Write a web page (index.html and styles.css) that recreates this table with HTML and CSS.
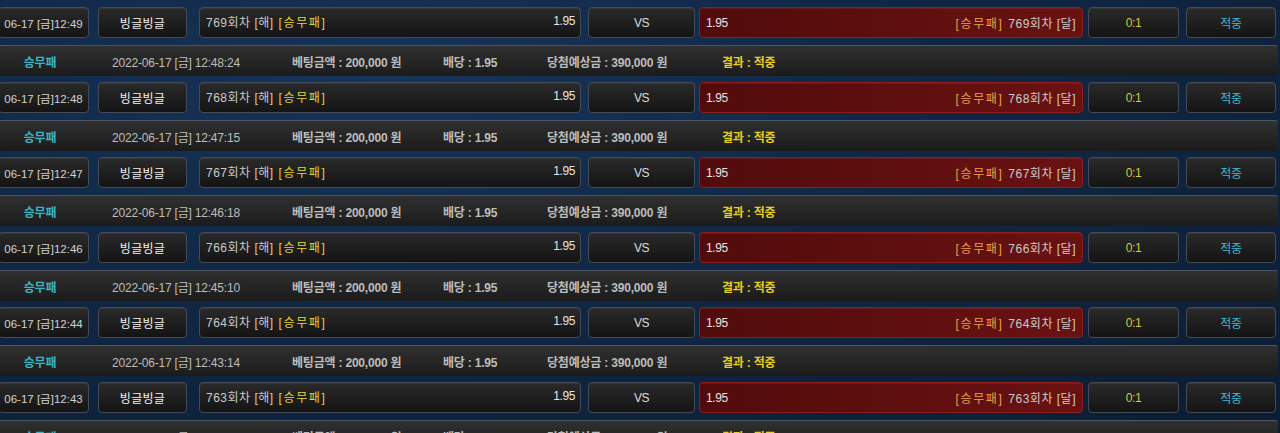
FILE: index.html
```html
<!DOCTYPE html>
<html lang="ko">
<head>
<meta charset="utf-8">
<link rel="stylesheet" href="styles.css">
</head>
<body>
<div class="list">
  <div class="bet">
    <div class="top">
      <div class="box date">06-17 [금]12:49</div>
      <div class="box name">빙글빙글</div>
      <div class="box home"><span><span class="rnd">769회차 [해]</span> <span class="type">[승무패]</span></span><span class="odd">1.95</span></div>
      <div class="box vs">VS</div>
      <div class="box away"><span class="odd">1.95</span><span><span class="type2">[승무패]</span> <span class="rnd">769회차 [달]</span></span></div>
      <div class="box score">0:1</div>
      <div class="box res">적중</div>
    </div>
    <div class="info">
      <span class="c1">승무패</span><span class="c2">2022-06-17 [금] 12:48:24</span><span class="c3">베팅금액 : 200,000 원</span><span class="c4">배당 : 1.95</span><span class="c5">당첨예상금 : 390,000 원</span><span class="c6">결과 : 적중</span>
    </div>
  </div>
  <div class="bet">
    <div class="top">
      <div class="box date">06-17 [금]12:48</div>
      <div class="box name">빙글빙글</div>
      <div class="box home"><span><span class="rnd">768회차 [해]</span> <span class="type">[승무패]</span></span><span class="odd">1.95</span></div>
      <div class="box vs">VS</div>
      <div class="box away"><span class="odd">1.95</span><span><span class="type2">[승무패]</span> <span class="rnd">768회차 [달]</span></span></div>
      <div class="box score">0:1</div>
      <div class="box res">적중</div>
    </div>
    <div class="info">
      <span class="c1">승무패</span><span class="c2">2022-06-17 [금] 12:47:15</span><span class="c3">베팅금액 : 200,000 원</span><span class="c4">배당 : 1.95</span><span class="c5">당첨예상금 : 390,000 원</span><span class="c6">결과 : 적중</span>
    </div>
  </div>
  <div class="bet">
    <div class="top">
      <div class="box date">06-17 [금]12:47</div>
      <div class="box name">빙글빙글</div>
      <div class="box home"><span><span class="rnd">767회차 [해]</span> <span class="type">[승무패]</span></span><span class="odd">1.95</span></div>
      <div class="box vs">VS</div>
      <div class="box away"><span class="odd">1.95</span><span><span class="type2">[승무패]</span> <span class="rnd">767회차 [달]</span></span></div>
      <div class="box score">0:1</div>
      <div class="box res">적중</div>
    </div>
    <div class="info">
      <span class="c1">승무패</span><span class="c2">2022-06-17 [금] 12:46:18</span><span class="c3">베팅금액 : 200,000 원</span><span class="c4">배당 : 1.95</span><span class="c5">당첨예상금 : 390,000 원</span><span class="c6">결과 : 적중</span>
    </div>
  </div>
  <div class="bet">
    <div class="top">
      <div class="box date">06-17 [금]12:46</div>
      <div class="box name">빙글빙글</div>
      <div class="box home"><span><span class="rnd">766회차 [해]</span> <span class="type">[승무패]</span></span><span class="odd">1.95</span></div>
      <div class="box vs">VS</div>
      <div class="box away"><span class="odd">1.95</span><span><span class="type2">[승무패]</span> <span class="rnd">766회차 [달]</span></span></div>
      <div class="box score">0:1</div>
      <div class="box res">적중</div>
    </div>
    <div class="info">
      <span class="c1">승무패</span><span class="c2">2022-06-17 [금] 12:45:10</span><span class="c3">베팅금액 : 200,000 원</span><span class="c4">배당 : 1.95</span><span class="c5">당첨예상금 : 390,000 원</span><span class="c6">결과 : 적중</span>
    </div>
  </div>
  <div class="bet">
    <div class="top">
      <div class="box date">06-17 [금]12:44</div>
      <div class="box name">빙글빙글</div>
      <div class="box home"><span><span class="rnd">764회차 [해]</span> <span class="type">[승무패]</span></span><span class="odd">1.95</span></div>
      <div class="box vs">VS</div>
      <div class="box away"><span class="odd">1.95</span><span><span class="type2">[승무패]</span> <span class="rnd">764회차 [달]</span></span></div>
      <div class="box score">0:1</div>
      <div class="box res">적중</div>
    </div>
    <div class="info">
      <span class="c1">승무패</span><span class="c2">2022-06-17 [금] 12:43:14</span><span class="c3">베팅금액 : 200,000 원</span><span class="c4">배당 : 1.95</span><span class="c5">당첨예상금 : 390,000 원</span><span class="c6">결과 : 적중</span>
    </div>
  </div>
  <div class="bet">
    <div class="top">
      <div class="box date">06-17 [금]12:43</div>
      <div class="box name">빙글빙글</div>
      <div class="box home"><span><span class="rnd">763회차 [해]</span> <span class="type">[승무패]</span></span><span class="odd">1.95</span></div>
      <div class="box vs">VS</div>
      <div class="box away"><span class="odd">1.95</span><span><span class="type2">[승무패]</span> <span class="rnd">763회차 [달]</span></span></div>
      <div class="box score">0:1</div>
      <div class="box res">적중</div>
    </div>
    <div class="info">
      <span class="c1">승무패</span><span class="c2">2022-06-17 [금] 12:42:13</span><span class="c3">베팅금액 : 200,000 원</span><span class="c4">배당 : 1.95</span><span class="c5">당첨예상금 : 390,000 원</span><span class="c6">결과 : 적중</span>
    </div>
  </div>
</div>
</body>
</html>
```

FILE: styles.css
```css
html, body {
  margin: 0;
  padding: 0;
  height: 433px;
  overflow: hidden;
}
body {
  background: radial-gradient(ellipse at 30% 20%, #17345a 0%, #102744 45%, #0c1d33 100%);
  font-family: "Liberation Sans", "Noto Sans CJK KR", sans-serif;
  font-size: 12px;
  color: #cfcfcf;
}
.list {
  padding-top: 7px;
  margin-left: -2px;
  width: 1280px;
}
.bet {
  display: flex;
  flex-direction: column;
}
.top {
  display: flex;
  height: 31px;
  margin-bottom: 7px;
}
.box {
  box-sizing: border-box;
  height: 31px;
  border: 1px solid #444b56;
  border-radius: 4px;
  background: linear-gradient(#2a2a2a, #141414);
  box-shadow: inset 0 1px 0 rgba(255, 255, 255, 0.06);
  display: flex;
  align-items: center;
  justify-content: center;
  white-space: nowrap;
  letter-spacing: -0.4px;
}
.date { width: 91px; margin-right: 9px; color: #d2d2d2; font-size: 11.5px; letter-spacing: 0; }
.name { width: 89px; margin-right: 12px; color: #f0f0f0; letter-spacing: 0.3px; }
.home {
  width: 382px;
  margin-right: 7px;
  justify-content: space-between;
  padding: 0 5px 0 6px;
  align-items: flex-start;
  padding-top: 5px;
}
.home .odd { padding-top: 1px; }
.away {
  width: 384px;
  margin-right: 5px;
  justify-content: space-between;
  padding: 0 6px 0 6px;
  background: linear-gradient(to right, #520b0b, #6a1212);
  border-color: #8e1d1d;
}
.vs { width: 107px; margin-right: 4px; color: #dcdcdc; }
.score { width: 91px; margin-right: 7px; color: #d8c63c; }
.res { width: 90px; color: #3fb9d2; }
.rnd { color: #cbcbcb; letter-spacing: 0.5px; }
.type { color: #e6d33a; letter-spacing: 1.6px; margin-left: 2px; }
.type2 { color: #e8a246; letter-spacing: 1.6px; margin-right: 2px; }
.odd { color: #e4e4e4; }
.info {
  box-sizing: border-box;
  height: 31px;
  width: 1280px;
  margin-bottom: 6px;
  border-top: 1px solid #4c5563;
  border-radius: 3px;
  background: linear-gradient(#303030, #1b1b1b);
  display: flex;
  align-items: center;
  white-space: nowrap;
  color: #bdbdbd;
  letter-spacing: -0.2px;
}
.info span { display: block; }
.c1 { width: 84px; text-align: center; color: #3bb6c6; font-weight: bold; }
.c2 { width: 180px; margin-left: 30px; }
.c3 { width: 151px; font-weight: bold; }
.c4 { width: 104px; font-weight: bold; }
.c5 { width: 175px; font-weight: bold; }
.c6 { color: #e6cf1f; font-weight: bold; }
```
